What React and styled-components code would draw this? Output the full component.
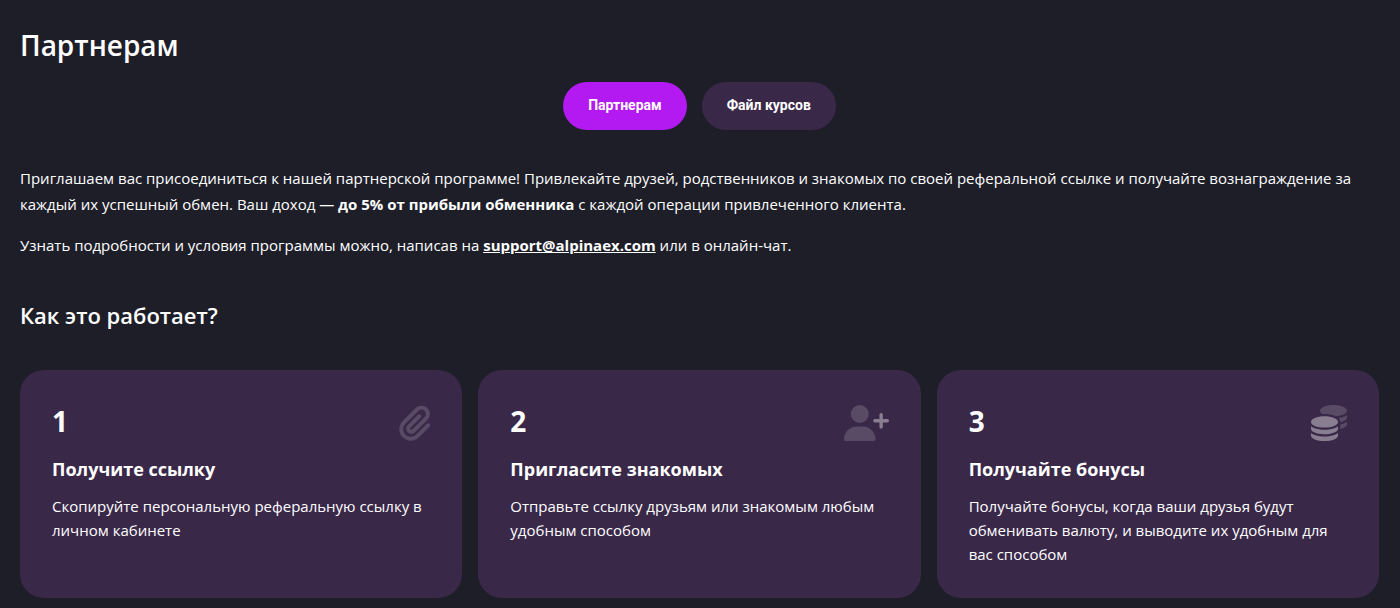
import React from "react";
import styled, { createGlobalStyle } from "styled-components";

const GlobalStyle = createGlobalStyle`
  * { box-sizing: border-box; }
  body {
    margin: 0;
    background: #1e1e29;
    color: #fff;
    font-family: "Segoe UI", "Open Sans", "Noto Sans", sans-serif;
    font-size: 15px;
  }
  h1, h2, h3, p, ol { margin: 0; padding: 0; }
`;

const Page = styled.main`
  padding: 23px 21px 10px 20px;
`;

const Title = styled.h1`
  font-size: 28px;
  line-height: 44px;
  font-weight: 600;
`;

const Tabs = styled.nav`
  display: flex;
  justify-content: center;
  gap: 15px;
  margin-top: 15px;
`;

const Tab = styled.button`
  height: 48px;
  padding: 0 25px 2px;
  border: 0;
  border-radius: 24px;
  background: ${(p) => (p.$active ? "#b31af2" : "#3a2849")};
  color: #fff;
  font: 700 14px/20px Roboto, sans-serif;
  cursor: pointer;
`;

const Intro = styled.section`
  display: flex;
  flex-direction: column;
  gap: 15px;
  margin-top: 35px;
  line-height: 26px;
`;

const MailLink = styled.a`
  color: inherit;
  font-weight: 700;
  text-decoration: underline;
`;

const Subtitle = styled.h2`
  margin-top: 40px;
  font-size: 22px;
  line-height: 34px;
  font-weight: 600;
`;

const Steps = styled.ol`
  display: grid;
  grid-template-columns: repeat(3, minmax(0, 1fr));
  gap: 16px;
  margin-top: 38px;
  list-style: none;
`;

const Step = styled.li`
  padding: 32px;
  border-radius: 24px;
  background: #3a2849;
`;

const StepTop = styled.div`
  display: flex;
  justify-content: space-between;
  align-items: flex-end;
  height: 39px;
  margin-bottom: 9px;
`;

const Icon = styled.svg`
  display: block;
  height: 36px;
`;

const StepNumber = styled.span`
  font-size: 28px;
  line-height: 40px;
  font-weight: 700;
`;

const StepTitle = styled.h3`
  font-size: 18px;
  line-height: 38px;
  font-weight: 700;
`;

const StepText = styled.p`
  margin-top: 6px;
  line-height: 24px;
`;

const Strong = "#897d92";
const Faint = "#594a66";

const PaperclipIcon = () => (
  <Icon viewBox="0 0 448 512" aria-hidden="true">
    <path
      fill={Faint}
      d="M364.2 83.8c-24.4-24.4-64-24.4-88.4 0l-184 184c-42.1 42.1-42.1 110.3 0 152.4s110.3 42.1 152.4 0l152-152c10.9-10.9 28.7-10.9 39.6 0s10.9 28.7 0 39.6l-152 152c-64 64-167.6 64-231.6 0s-64-167.6 0-231.6l184-184c46.3-46.3 121.3-46.3 167.6 0s46.3 121.3 0 167.6l-176 176c-28.6 28.6-75 28.6-103.6 0s-28.6-75 0-103.6l144-144c10.9-10.9 28.7-10.9 39.6 0s10.9 28.7 0 39.6l-144 144c-6.7 6.7-6.7 17.7 0 24.4s17.7 6.7 24.4 0l176-176c24.4-24.4 24.4-64 0-88.4z"
    />
  </Icon>
);

const UserPlusIcon = () => (
  <Icon viewBox="0 0 640 512" aria-hidden="true">
    <path
      fill={Faint}
      d="M96 128a128 128 0 1 1 256 0A128 128 0 1 1 96 128zM0 482.3C0 383.8 79.8 304 178.3 304h91.4C368.2 304 448 383.8 448 482.3c0 16.4-13.3 29.7-29.7 29.7H29.7C13.3 512 0 498.7 0 482.3z"
    />
    <path
      fill={Strong}
      d="M504 312V248H440c-13.3 0-24-10.7-24-24s10.7-24 24-24h64V136c0-13.3 10.7-24 24-24s24 10.7 24 24v64h64c13.3 0 24 10.7 24 24s-10.7 24-24 24H552v64c0 13.3-10.7 24-24 24s-24-10.7-24-24z"
    />
  </Icon>
);

const CoinsIcon = () => (
  <Icon viewBox="0 0 512 512" aria-hidden="true">
    <path
      fill={Faint}
      d="M512 80c0 18-14.3 34.6-38.4 48c-29.1 16.1-72.5 27.5-122.3 30.9c-3.7-1.8-7.4-3.5-11.3-5C300.6 137.4 248.2 128 192 128c-8.3 0-16.4 .2-24.5 .6l-1.1-.6C142.3 114.6 128 98 128 80c0-44.2 86-80 192-80S512 35.8 512 80zM416 240c0-21.9-10.6-39.9-24.1-53.4c28.3-4.4 54.2-11.4 76.2-20.5c16.3-6.8 31.5-15.2 43.9-25.5V176c0 19.3-16.5 37.1-43.8 50.9c-14.6 7.4-32.4 13.7-52.4 18.5c.1-1.8 .2-3.5 .2-5.3zM416 336V304 278.1c19-4.2 36.5-9.5 52.1-16c16.3-6.8 31.5-15.2 43.9-25.5V272c0 10.5-5 21-14.9 30.9c-16.3 16.3-45 29.7-81.3 38.4c.1-1.7 .2-3.5 .2-5.3z"
    />
    <path
      fill={Strong}
      d="M384 240c0 44-86 80-192 80S0 284 0 240s86-80 192-80s192 36 192 80zM384 336c0 18-14.3 34.6-38.4 48c-1.8 1-3.6 1.9-5.5 2.9C304.9 404.7 251.6 416 192 416c-62.8 0-118.6-12.6-153.6-32C14.3 370.6 0 354 0 336V300.6c12.5 10.3 27.6 18.7 43.9 25.5C83.4 342.6 135.8 352 192 352s108.6-9.4 148.1-25.9c7.8-3.2 15.3-6.9 22.4-10.9c6.1-3.4 11.8-7.2 17.2-11.2c1.5-1.1 2.9-2.3 4.3-3.4V336zM192 448c56.2 0 108.6-9.4 148.1-25.9c16.3-6.8 31.5-15.2 43.9-25.5V432c0 44.2-86 80-192 80S0 476.2 0 432V396.6c12.5 10.3 27.6 18.7 43.9 25.5C83.4 438.6 135.8 448 192 448z"
    />
  </Icon>
);

const steps = [
  {
    title: "Получите ссылку",
    text: "Скопируйте персональную реферальную ссылку в личном кабинете",
    icon: <PaperclipIcon />,
  },
  {
    title: "Пригласите знакомых",
    text: "Отправьте ссылку друзьям или знакомым любым удобным способом",
    icon: <UserPlusIcon />,
  },
  {
    title: "Получайте бонусы",
    text: "Получайте бонусы, когда ваши друзья будут обменивать валюту, и выводите их удобным для вас способом",
    icon: <CoinsIcon />,
  },
];

export default function App() {
  return (
    <>
      <GlobalStyle />
      <Page>
        <Title>Партнерам</Title>
        <Tabs>
          <Tab type="button" $active>Партнерам</Tab>
          <Tab type="button">Файл курсов</Tab>
        </Tabs>
        <Intro>
          <p>
            Приглашаем вас присоединиться к нашей партнерской программе! Привлекайте друзей,
            родственников и знакомых по своей реферальной ссылке и получайте вознаграждение за
            каждый их успешный обмен. Ваш доход — <strong>до 5% от прибыли обменника</strong> с
            каждой операции привлеченного клиента.
          </p>
          <p>
            Узнать подробности и условия программы можно, написав на{" "}
            <MailLink href="mailto:support@alpinaex.com">support@alpinaex.com</MailLink> или в
            онлайн-чат.
          </p>
        </Intro>
        <Subtitle>Как это работает?</Subtitle>
        <Steps>
          {steps.map((step, i) => (
            <Step key={step.title}>
              <StepTop>
                <StepNumber>{i + 1}</StepNumber>
                {step.icon}
              </StepTop>
              <StepTitle>{step.title}</StepTitle>
              <StepText>{step.text}</StepText>
            </Step>
          ))}
        </Steps>
      </Page>
    </>
  );
}
